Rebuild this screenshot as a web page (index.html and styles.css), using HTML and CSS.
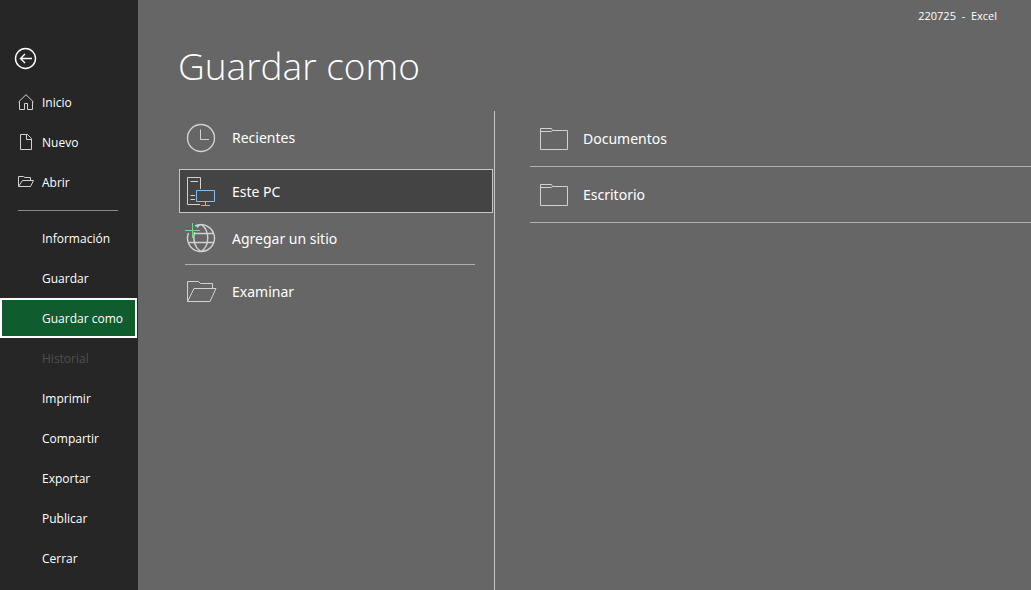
FILE: index.html
```html
<!DOCTYPE html>
<html lang="es">
<head>
<meta charset="utf-8">
<title>220725 - Excel</title>
<link rel="stylesheet" href="styles.css">
</head>
<body>
<div class="app">
  <nav class="sidebar" aria-label="Archivo">
    <button class="back" type="button" aria-label="Volver">
      <svg class="soft" width="22" height="22" viewBox="0 0 22 22"><circle cx="10.500" cy="11.500" r="10"/><path d="M17 11.500H5.500M10 7L5.500 11.500L10 16"/></svg>
    </button>
    <button class="nav-item" type="button">
      <svg class="nav-icon" width="16" height="16" viewBox="0 0 16 16"><path d="M.5 7L8 -.3L15.500 7M1.500 6.500V14.500H6.500V8.500H9.500V14.500H14.500V6.500"/></svg>
      Inicio
    </button>
    <button class="nav-item" type="button">
      <svg class="nav-icon" width="16" height="16" viewBox="0 0 16 16"><path d="M2.500 -.5H9.500L13.500 3.500V14.500H2.500ZM8.500 -.5V4.500H13.500"/></svg>
      Nuevo
    </button>
    <button class="nav-item" type="button">
      <svg class="nav-icon" width="16" height="16" viewBox="0 0 16 16"><path d="M.5 11.500V1.500H5.500L7 2.500H12.500V5.500M.5 11.500L4.500 5.500H15.500L12.500 11.500Z"/></svg>
      Abrir
    </button>
    <hr class="nav-rule">
    <button class="nav-item plain" type="button">Información</button>
    <button class="nav-item plain" type="button">Guardar</button>
    <button class="nav-item plain selected" type="button" aria-current="page">Guardar como</button>
    <button class="nav-item plain" type="button" disabled>Historial</button>
    <button class="nav-item plain" type="button">Imprimir</button>
    <button class="nav-item plain" type="button">Compartir</button>
    <button class="nav-item plain" type="button">Exportar</button>
    <button class="nav-item plain" type="button">Publicar</button>
    <button class="nav-item plain" type="button">Cerrar</button>
  </nav>
  <main class="main">
    <header class="titlebar">220725&nbsp; -&nbsp; Excel</header>
    <h1 class="title">Guardar como</h1>
    <div class="columns">
      <section class="places" aria-label="Ubicaciones">
        <button class="place" type="button">
          <svg width="32" height="32" viewBox="0 0 32 32"><circle class="soft" cx="15" cy="17" r="13.500"/><path d="M14.500 8.500V18.500H23"/></svg>
          Recientes
        </button>
        <button class="place current" type="button">
          <svg width="32" height="32" viewBox="0 0 32 32"><path d="M14 29.500H1.500V2.500H14.500V14M4.500 6.500H12M4.500 20.500H9M4.500 24.500H9"/><path class="blue" d="M10.500 15.500H28.500V26.500H10.500ZM19.500 26.500V30.500M15 30.500H24"/></svg>
          Este PC
        </button>
        <button class="place" type="button">
          <svg width="32" height="32" viewBox="0 0 32 32"><path class="soft" d="M9 4A13.500 13.500 0 1 1 2.500 11M9 11.500H27.500M3 20.500H27.500M11 5.500C13 2.500 14 2.500 15 2.500C24 8 24 24 15 29.500C8 25 7 17 8.500 10"/><path class="green" d="M-1 8.500H14M6.500 1V16"/></svg>
          Agregar un sitio
        </button>
        <hr class="place-rule">
        <button class="place" type="button">
          <svg width="32" height="32" viewBox="0 0 32 32"><path d="M1.500 26.500V6.500H12.500L14.500 8.500H26.500V13.500M1.500 26.500L8 13.500H30L24 26.500Z"/></svg>
          Examinar
        </button>
      </section>
      <section class="folders" aria-label="Carpetas">
        <button class="folder" type="button">
          <svg width="28" height="24" viewBox="0 0 28 24"><path d="M.5 1.500H11.500L12.500 3.500H27.500V22.500H.5ZM.5 4.500H11.500L12.500 3.500"/></svg>
          Documentos
        </button>
        <button class="folder" type="button">
          <svg width="28" height="24" viewBox="0 0 28 24"><path d="M.5 1.500H11.500L12.500 3.500H27.500V22.500H.5ZM.5 4.500H11.500L12.500 3.500"/></svg>
          Escritorio
        </button>
      </section>
    </div>
  </main>
</div>
</body>
</html>
```
FILE: styles.css
```css
* { box-sizing: border-box; }
body {
  margin: 0;
  background: #666;
  color: #fff;
  font-family: "Open Sans", "Noto Sans", sans-serif;
  font-size: 12px;
}
button {
  margin: 0;
  padding: 0;
  border: 0;
  background: none;
  color: inherit;
  font: inherit;
  text-align: left;
}
svg {
  flex: none;
  overflow: visible;
  fill: none;
  stroke: #d2d2d2;
  stroke-width: 1;
}
.soft { stroke-width: 1.4; }
.blue { stroke: #83beec; }
.green { stroke: #6fdc8c; }
.app { display: flex; min-height: 100vh; }
.sidebar {
  display: flex;
  flex-direction: column;
  flex: none;
  width: 138px;
  padding: 47px 1px 0 0;
  background: #262626;
}
.back {
  display: flex;
  align-self: flex-start;
  margin: 0 0 13px 15px;
}
.back svg { stroke: #fff; }
.nav-item {
  display: flex;
  align-items: center;
  gap: 8px;
  height: 40px;
  padding: 1px 0 0 18px;
}
.plain { padding-left: 42px; }
.nav-item:disabled { color: #505050; }
.selected {
  padding-left: 40px;
  border: 2px solid #fff;
  background: #0f5c2f;
}
.nav-rule {
  width: 100px;
  height: 1px;
  margin: 8px 0 7px 18px;
  border: 0;
  background: #8a8a8a;
}
.main {
  display: flex;
  flex-direction: column;
  flex: 1;
  min-width: 0;
}
.titlebar {
  padding: 8px 34px 0 0;
  font-size: 11px;
  line-height: 16px;
  text-align: right;
}
.title {
  margin: 15px 0 18px 40px;
  font-size: 37px;
  font-weight: 300;
  line-height: 54px;
}
.columns {
  display: flex;
  flex: 1;
  font-family: "Noto Sans", "Open Sans", sans-serif;
}
.places {
  display: flex;
  flex-direction: column;
  flex: none;
  width: 357px;
  padding: 4px 1px 0 41px;
  border-right: 1px solid #c6c6c6;
}
.place {
  display: flex;
  align-items: center;
  gap: 14px;
  height: 44px;
  padding-left: 7px;
  font-size: 14px;
}
.place + .place { margin-top: 3px; }
.place:first-child { margin-bottom: 7px; }
.current {
  padding-left: 6px;
  border: 1px solid #c6c6c6;
  background: #444;
}
.place-rule {
  width: 290px;
  height: 1px;
  margin: 4px 0 4px 6px;
  border: 0;
  background: #b0b0b0;
}
.folders {
  display: flex;
  flex-direction: column;
  flex: 1;
  padding-left: 35px;
}
.folder {
  display: flex;
  align-items: center;
  gap: 15px;
  height: 56px;
  padding-left: 10px;
  border-bottom: 1px solid #b0b0b0;
  font-size: 14px;
}
```
